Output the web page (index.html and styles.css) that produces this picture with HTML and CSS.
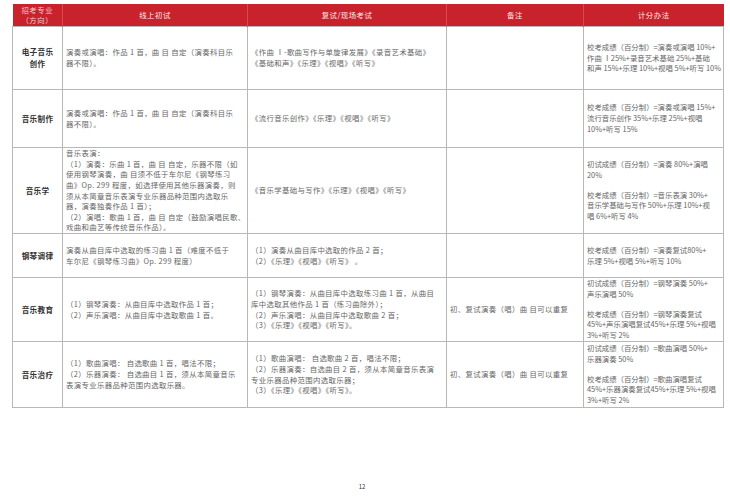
FILE: index.html
```html
<!DOCTYPE html>
<html lang="zh-CN">
<head>
<meta charset="utf-8">
<link rel="stylesheet" href="styles.css">
</head>
<body>
<table class="grid">
  <colgroup>
    <col class="c1"><col class="c2"><col class="c3"><col class="c4"><col class="c5">
  </colgroup>
  <thead>
    <tr class="head">
      <th>招考专业<br>（方向）</th>
      <th>线上初试</th>
      <th>复试/现场考试</th>
      <th>备注</th>
      <th>计分办法</th>
    </tr>
  </thead>
  <tbody>
    <tr class="r1">
      <td class="major">电子音乐<br>创作</td>
      <td class="wide">演奏或演唱：作品 1 首，曲 目 自定（演奏科目乐<br>器不限）。</td>
      <td class="wide">《作曲 Ⅰ-歌曲写作与单旋律发展》《录音艺术基础》<br>《基础和声》《乐理》《视唱》《听写》</td>
      <td></td>
      <td class="score">校考成绩（百分制）=演奏或演唱 10%+<br>作曲 Ⅰ25%+录音艺术基础 25%+基础<br>和声 15%+乐理 10%+视唱 5%+听写 10%</td>
    </tr>
    <tr class="r2">
      <td class="major">音乐制作</td>
      <td class="wide">演奏或演唱：作品 1 首，曲 目 自定（演奏科目乐<br>器不限）。</td>
      <td class="wide">《流行音乐创作》《乐理》《视唱》《听写》</td>
      <td></td>
      <td class="score">校考成绩（百分制）=演奏或演唱 15%+<br>流行音乐创作 35%+乐理 25%+视唱<br>10%+听写 15%</td>
    </tr>
    <tr class="r3">
      <td class="major">音乐学</td>
      <td class="wide dense">音乐表演：<br>（1）演奏：乐曲 1 首，曲 目 自定，乐器不限（如<br>使用钢琴演奏，曲 目须不低于车尔尼《钢琴练习<br>曲》Op. 299 程度，如选择使用其他乐器演奏，则<br>须从本简章音乐表演专业乐器品种范围内选取乐<br>器，演奏独奏作品 1 首）；<br>（2）演唱：歌曲 1 首，曲 目 自定（鼓励演唱民歌、<br>戏曲和曲艺等传统音乐作品）。</td>
      <td class="wide">《音乐学基础与写作》《乐理》《视唱》《听写》</td>
      <td></td>
      <td class="score"><p>初试成绩（百分制）=演奏 80%+演唱<br>20%</p><p>校考成绩（百分制）=音乐表演 30%+<br>音乐学基础与写作 50%+乐理 10%+视<br>唱 6%+听写 4%</p></td>
    </tr>
    <tr class="r4">
      <td class="major">钢琴调律</td>
      <td class="wide">演奏从曲目库中选取的练习曲 1 首（难度不低于<br>车尔尼《钢琴练习曲》Op. 299 程度）</td>
      <td class="wide">（1）演奏从曲目库中选取的作品 2 首；<br>（2）《乐理》《视唱》《听写》 。</td>
      <td></td>
      <td class="score">校考成绩（百分制）=演奏复试80%+<br>乐理 5%+视唱 5%+听写 10%</td>
    </tr>
    <tr class="r5">
      <td class="major">音乐教育</td>
      <td class="wide">（1）钢琴演奏：从曲目库中选取作品 1 首；<br>（2）声乐演唱：从曲目库中选取歌曲 1 首。</td>
      <td class="wide">（1）钢琴演奏：从曲目库中选取练习曲 1 首，从曲目<br>库中选取其他作品 1 首（练习曲除外）；<br>（2）声乐演唱：从曲目库中选取歌曲 2 首；<br>（3）《乐理》《视唱》《听写》。</td>
      <td class="wide">初、复试演奏（唱）曲 目可以重复</td>
      <td class="score"><p>初试成绩（百分制）=钢琴演奏 50%+<br>声乐演唱 50%</p><p>校考成绩（百分制）=钢琴演奏复试<br>45%+声乐演唱复试45%+乐理 5%+视唱<br>3%+听写 2%</p></td>
    </tr>
    <tr class="r6">
      <td class="major">音乐治疗</td>
      <td class="wide">（1）歌曲演唱： 自选歌曲 1 首，唱法不限；<br>（2）乐器演奏： 自选曲目 1 首，须从本简章音乐<br>表演专业乐器品种范围内选取乐器。</td>
      <td class="wide">（1）歌曲演唱： 自选歌曲 2 首，唱法不限；<br>（2）乐器演奏：自选曲目 2 首，须从本简章音乐表演<br>专业乐器品种范围内选取乐器；<br>（3）《乐理》《视唱》《听写》。</td>
      <td class="wide">初、复试演奏（唱）曲 目可以重复</td>
      <td class="score"><p>初试成绩（百分制）=歌曲演唱 50%+<br>乐器演奏 50%</p><p>校考成绩（百分制）=歌曲演唱复试<br>45%+乐器演奏复试45%+乐理 5%+视唱<br>3%+听写 2%</p></td>
    </tr>
  </tbody>
</table>
<div class="pageno">12</div>
</body>
</html>
```
FILE: styles.css
```css
html, body {
  margin: 0;
  padding: 0;
  background: #ffffff;
}
body {
  width: 730px;
  height: 500px;
  overflow: hidden;
  font-family: "Noto Sans CJK SC", "Noto Sans", sans-serif;
  color: #666666;
}
.grid {
  margin: 4px 0 0 12px;
  border-collapse: collapse;
  table-layout: fixed;
  width: 711px;
  font-size: 7.4px;
  line-height: 10.8px;
}
.c1 { width: 50px; }
.c2 { width: 185px; }
.c3 { width: 199px; }
.c4 { width: 137px; }
.c5 { width: 140px; }
.grid th {
  background: #c8232c;
  color: #fbeaea;
  font-weight: 400;
  height: 22px;
  padding: 0;
  text-align: center;
  vertical-align: middle;
  border-left: 1px solid #d84a52;
  line-height: 10.5px;
  letter-spacing: 0.5px;
}
.grid th:first-child { border-left: none; color: #f2c9cb; }
.grid td {
  border: 1px solid #b8b8b8;
  padding: 0 3px;
  vertical-align: middle;
  text-align: left;
  white-space: nowrap;
  overflow: hidden;
}
.grid td.wide { letter-spacing: 0.35px; }
.grid td.score { letter-spacing: 0; padding-left: 3px; padding-right: 1px; }
.grid td.major {
  text-align: center;
  font-weight: 700;
  color: #333333;
  font-size: 7.6px;
  line-height: 12px;
  letter-spacing: 0.3px;
}
.grid td p { margin: 0; }
.grid td p + p { margin-top: 9px; }
.grid td.dense { line-height: 10.6px; padding-top: 0; padding-bottom: 0; }
.r1 { height: 63px; }
.r2 { height: 58px; }
.r3 { height: 86px; }
.r4 { height: 44px; }
.r5 { height: 64px; }
.r6 { height: 66px; }
.pageno {
  margin-top: 74px;
  text-align: center;
  padding-right: 6px;
  font-size: 6px;
  line-height: 9px;
  color: #333333;
}
```
